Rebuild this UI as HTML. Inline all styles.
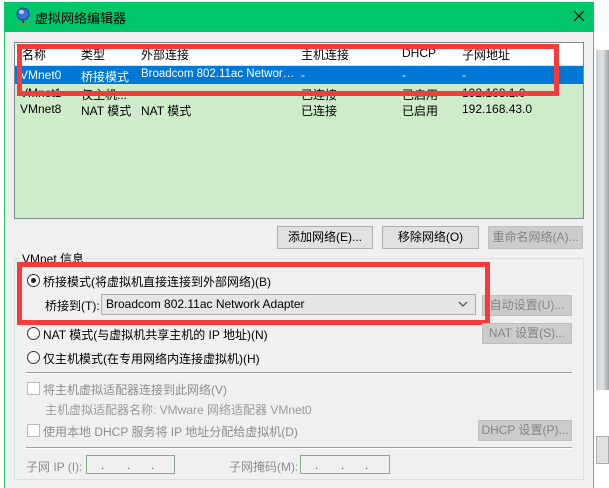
<!DOCTYPE html><html><head><meta charset="utf-8"><style>
*{margin:0;padding:0;box-sizing:border-box}
body{width:609px;height:488px;overflow:hidden;background:#fff;font-family:"Liberation Sans","Noto Sans CJK SC",sans-serif;font-size:12px;color:#000;position:relative}
.a{position:absolute;white-space:nowrap}
.btn{position:absolute;background:#e1e1e1;border:1px solid #adadad;text-align:center;line-height:20px;font-size:12px}
.dis{background:#cccccc;border-color:#bfbfbf;color:#838383}
.g{color:#8d8d8d}
.rad{position:absolute;width:13px;height:13px;border:1px solid #333;border-radius:50%;background:#fff}
.chk{position:absolute;width:13px;height:13px;border:1px solid #bcbcbc;background:#fff}
.red{position:absolute;border:5px solid #f93a3a}
.ip{position:absolute;height:19px;border:1px solid #8aa88a;background:#f0f0f0;color:#666}
.ip span{position:absolute;top:2px}
</style></head><body>
<div class="a" style="left:596px;top:50px;width:13px;height:340px;background:linear-gradient(90deg,#c9cdd0,#e2e4e6,#9ea3a8)"></div>
<div class="a" style="left:596px;top:436px;width:13px;height:28px;border:1px solid #adadad;background:#e1e1e1"></div>
<div class="a" style="left:4px;top:2px;width:590px;height:486px;background:#f0f0f0;border-left:1px solid #2ecc71;border-right:1px solid #2ecc71"></div>
<div class="a" style="left:4px;top:2px;width:590px;height:30px;background:#00c86a"></div>
<svg class="a" style="left:14px;top:6px" width="18" height="20" viewBox="0 0 18 20"><circle cx="9" cy="8" r="6" fill="#3a6fd8" stroke="#1b3f8f"/><ellipse cx="7.5" cy="6" rx="2.5" ry="2" fill="#b8d4ff"/><rect x="8" y="14" width="2" height="3" fill="#444"/><rect x="3" y="17" width="12" height="2" fill="#3ab54a"/></svg>
<div class="a" style="left:35px;top:8px;font-size:13px">虚拟网络编辑器</div>
<svg class="a" style="left:573px;top:10px" width="12" height="12"><path d="M1 1L11 11M11 1L1 11" stroke="#000" stroke-width="1.2"/></svg>
<div class="a" style="left:14px;top:42px;width:570px;height:177px;background:#ceecca;border:1px solid #828790"></div>
<div class="a" style="left:15px;top:43px;width:568px;height:22px;background:#fff"></div>
<div class="a" style="left:15px;top:66px;width:568px;height:18px;background:#0078d7"></div>
<div class="a" style="top:46px;left:22px">名称</div><div class="a" style="top:46px;left:81px">类型</div><div class="a" style="top:46px;left:141px">外部连接</div><div class="a" style="top:46px;left:301px">主机连接</div><div class="a" style="top:46px;left:402px">DHCP</div><div class="a" style="top:46px;left:462px">子网地址</div>
<div class="a" style="top:68px;left:20px;color:#fff">VMnet0</div><div class="a" style="top:68px;left:81px;color:#fff">桥接模式</div><div class="a" style="top:68px;left:141px;color:#fff;font-size:11.5px">Broadcom 802.11ac Networ…</div><div class="a" style="top:68px;left:301px;color:#fff">-</div><div class="a" style="top:68px;left:402px;color:#fff">-</div><div class="a" style="top:68px;left:462px;color:#fff">-</div>
<div class="a" style="top:86px;left:20px">VMnet1</div><div class="a" style="top:86px;left:81px">仅主机...</div><div class="a" style="top:86px;left:301px">已连接</div><div class="a" style="top:86px;left:402px">已启用</div><div class="a" style="top:86px;left:462px">192.168.1.0</div>
<div class="a" style="top:102px;left:20px">VMnet8</div><div class="a" style="top:102px;left:81px">NAT 模式</div><div class="a" style="top:102px;left:141px">NAT 模式</div><div class="a" style="top:102px;left:301px">已连接</div><div class="a" style="top:102px;left:402px">已启用</div><div class="a" style="top:102px;left:462px">192.168.43.0</div>
<div class="red" style="left:17px;top:44px;width:542px;height:52px"></div>
<div class="btn" style="left:277px;top:226px;width:96px;height:23px">添加网络(E)...</div>
<div class="btn" style="left:382px;top:226px;width:97px;height:23px">移除网络(O)</div>
<div class="btn dis" style="left:488px;top:226px;width:95px;height:23px">重命名网络(A)...</div>
<div class="a" style="left:14px;top:258px;width:570px;height:222px;border:1px solid #dcdcdc"></div>
<div class="a" style="left:20px;top:250px;background:#f0f0f0;padding:0 2px">VMnet 信息</div>
<div class="rad" style="left:27px;top:274px"><div style="position:absolute;left:3px;top:3px;width:5px;height:5px;border-radius:50%;background:#222"></div></div>
<div class="a" style="left:43px;top:273px">桥接模式(将虚拟机直接连接到外部网络)(B)</div>
<div class="a" style="left:45px;top:297px">桥接到(T):</div>
<div class="a" style="left:101px;top:294px;width:375px;height:21px;background:#e5e5e5;border:1px solid #adadad"></div>
<div class="a" style="left:106px;top:297px">Broadcom 802.11ac Network Adapter</div>
<svg class="a" style="left:458px;top:300px" width="10" height="8"><path d="M1 2l4 4 4-4" fill="none" stroke="#333"/></svg>
<div class="btn dis" style="left:482px;top:295px;width:90px;height:21px;line-height:19px">自动设置(U)...</div>
<div class="red" style="left:17px;top:262px;width:473px;height:63px"></div>
<div class="rad" style="left:27px;top:327px"></div>
<div class="a" style="left:43px;top:326px">NAT 模式(与虚拟机共享主机的 IP 地址)(N)</div>
<div class="btn dis" style="left:482px;top:323px;width:90px;height:21px;line-height:19px">NAT 设置(S)...</div>
<div class="rad" style="left:27px;top:351px"></div>
<div class="a" style="left:43px;top:350px">仅主机模式(在专用网络内连接虚拟机)(H)</div>
<div class="a" style="left:26px;top:372px;width:546px;height:2px;border-top:1px solid #a0a0a0;border-bottom:1px solid #fff"></div>
<div class="chk" style="left:27px;top:382px"></div>
<div class="a g" style="left:43px;top:381px">将主机虚拟适配器连接到此网络(V)</div>
<div class="a g" style="left:45px;top:401px;color:#9a9a9a">主机虚拟适配器名称: VMware 网络适配器 VMnet0</div>
<div class="chk" style="left:27px;top:424px"></div>
<div class="a g" style="left:43px;top:423px">使用本地 DHCP 服务将 IP 地址分配给虚拟机(D)</div>
<div class="btn dis" style="left:478px;top:420px;width:94px;height:21px;line-height:19px">DHCP 设置(P)...</div>
<div class="a" style="left:26px;top:447px;width:546px;height:2px;border-top:1px solid #a0a0a0;border-bottom:1px solid #fff"></div>
<div class="a g" style="left:26px;top:458px">子网 IP (I):</div>
<div class="ip" style="left:86px;top:455px;width:89px"><span style="left:14px">.</span><span style="left:40px">.</span><span style="left:64px">.</span></div>
<div class="a g" style="left:229px;top:458px">子网掩码(M):</div>
<div class="ip" style="left:300px;top:455px;width:90px"><span style="left:14px">.</span><span style="left:40px">.</span><span style="left:64px">.</span></div>
</body></html>
